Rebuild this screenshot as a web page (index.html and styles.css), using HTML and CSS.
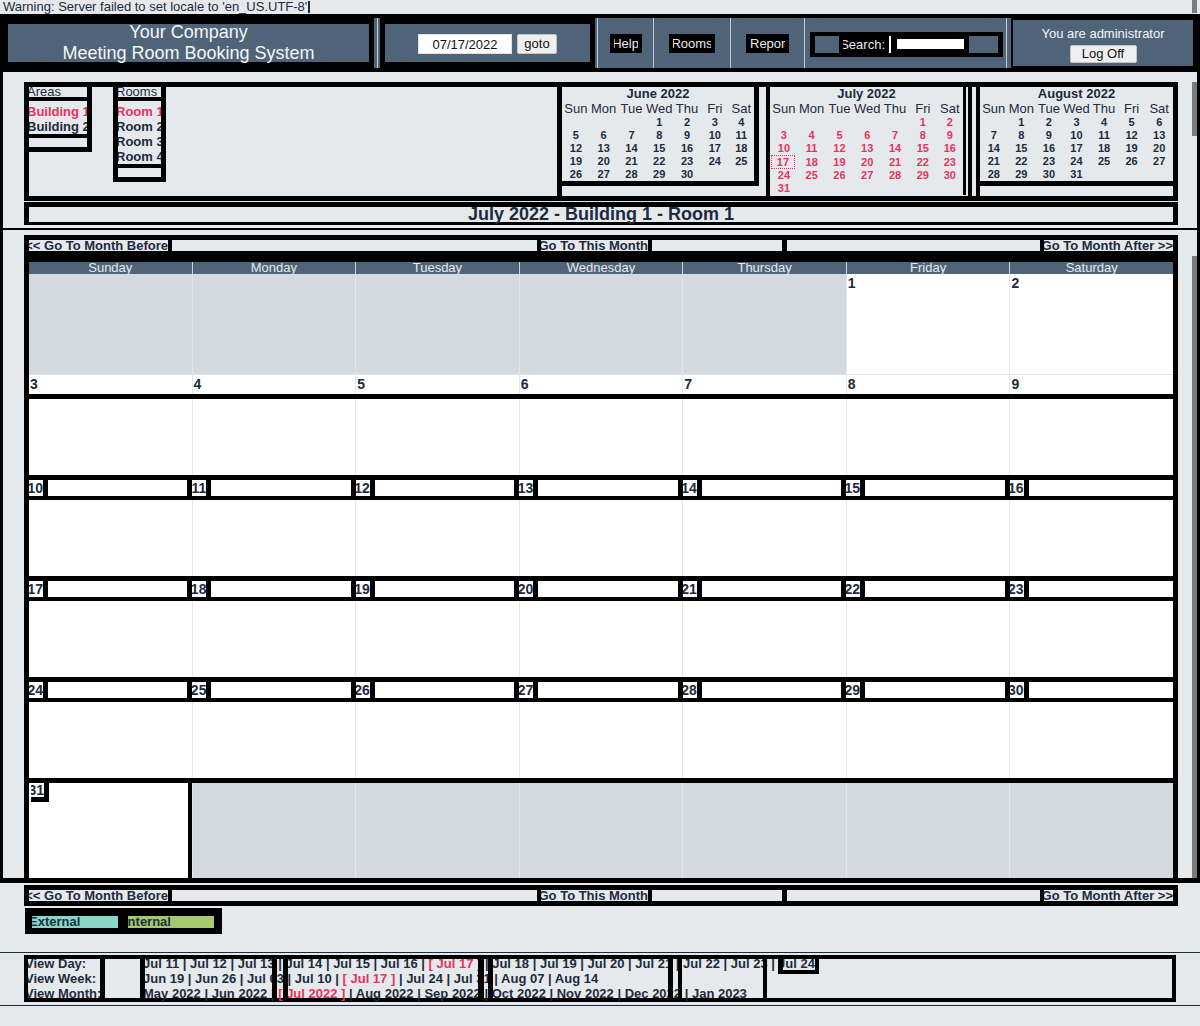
FILE: index.html
```html
<!DOCTYPE html>
<html lang="en">
<head>
<meta charset="utf-8">
<title>Meeting Room Booking System</title>
<link rel="stylesheet" href="styles.css">
</head>
<body>
<div class="warning">Warning: Server failed to set locale to 'en_US.UTF-8'<span class="caret"></span><span class="sb-thumb"></span></div>

<header class="banner">
  <div class="hcell company"><div class="company-box">Your Company<br>Meeting Room Booking System</div></div>
  <div class="hcell datecell"><div class="date-box"><span class="date-input">07/17/2022</span><span class="btn goto">goto</span></div></div>
  <div class="hcell linkcell help"><span class="blk">Help</span></div>
  <div class="hcell linkcell rooms"><span class="blk">Rooms</span></div>
  <div class="hcell linkcell report"><span class="blk">Report</span></div>
  <div class="hcell searchcell"><div class="search-box"><span class="sq"></span><span class="search-label"><span>Search:</span></span><span class="sbar"></span><span class="search-input"></span><span class="sq sq2"></span></div></div>
  <div class="hcell logon"><div class="logon-box"><div class="who">You are administrator</div><span class="btn logoff">Log Off</span></div></div>
</header>

<section class="panel top-panel">
  <div class="dwm">
    <div class="sel areas">
      <div class="sel-head">Areas</div>
      <ul class="sel-list">
        <li class="cur">Building 1</li>
        <li>Building 2</li>
      </ul>
      <div class="sel-foot"></div>
    </div>
    <div class="sel rooms">
      <div class="sel-head">Rooms</div>
      <ul class="sel-list">
        <li class="cur">Room 1</li>
        <li>Room 2</li>
        <li>Room 3</li>
        <li>Room 4</li>
      </ul>
      <div class="sel-foot"></div>
    </div>
    <div class="minicals">
      <div class="mc-cell june">
        <table class="mc">
          <tr><th colspan="7" class="mc-title">June 2022</th></tr>
          <tr class="mc-days"><th>Sun</th><th>Mon</th><th>Tue</th><th>Wed</th><th>Thu</th><th>Fri</th><th>Sat</th></tr>
          <tr><td></td><td></td><td></td><td>1</td><td>2</td><td>3</td><td>4</td></tr>
          <tr><td>5</td><td>6</td><td>7</td><td>8</td><td>9</td><td>10</td><td>11</td></tr>
          <tr><td>12</td><td>13</td><td>14</td><td>15</td><td>16</td><td>17</td><td>18</td></tr>
          <tr><td>19</td><td>20</td><td>21</td><td>22</td><td>23</td><td>24</td><td>25</td></tr>
          <tr><td>26</td><td>27</td><td>28</td><td>29</td><td>30</td><td></td><td></td></tr>
        </table>
      </div>
      <div class="mc-cell july">
        <table class="mc cur-month">
          <tr><th colspan="7" class="mc-title">July 2022</th></tr>
          <tr class="mc-days"><th>Sun</th><th>Mon</th><th>Tue</th><th>Wed</th><th>Thu</th><th>Fri</th><th>Sat</th></tr>
          <tr><td></td><td></td><td></td><td></td><td></td><td>1</td><td>2</td></tr>
          <tr><td>3</td><td>4</td><td>5</td><td>6</td><td>7</td><td>8</td><td>9</td></tr>
          <tr><td>10</td><td>11</td><td>12</td><td>13</td><td>14</td><td>15</td><td>16</td></tr>
          <tr><td><span class="today">17</span></td><td>18</td><td>19</td><td>20</td><td>21</td><td>22</td><td>23</td></tr>
          <tr><td>24</td><td>25</td><td>26</td><td>27</td><td>28</td><td>29</td><td>30</td></tr>
          <tr><td>31</td><td></td><td></td><td></td><td></td><td></td><td></td></tr>
        </table>
      </div>
      <div class="mc-cell august">
        <table class="mc">
          <tr><th colspan="7" class="mc-title">August 2022</th></tr>
          <tr class="mc-days"><th>Sun</th><th>Mon</th><th>Tue</th><th>Wed</th><th>Thu</th><th>Fri</th><th>Sat</th></tr>
          <tr><td></td><td>1</td><td>2</td><td>3</td><td>4</td><td>5</td><td>6</td></tr>
          <tr><td>7</td><td>8</td><td>9</td><td>10</td><td>11</td><td>12</td><td>13</td></tr>
          <tr><td>14</td><td>15</td><td>16</td><td>17</td><td>18</td><td>19</td><td>20</td></tr>
          <tr><td>21</td><td>22</td><td>23</td><td>24</td><td>25</td><td>26</td><td>27</td></tr>
          <tr><td>28</td><td>29</td><td>30</td><td>31</td><td></td><td></td><td></td></tr>
        </table>
      </div>
    </div>
  </div>
  <div class="title-box"><h2>July 2022 - Building 1 - Room 1</h2></div>
  <span class="sb-thumb"></span>
</section>

<section class="panel cal-panel">
  <nav class="monthnav">
    <div class="mn-seg mn-left"><a class="mn-link"><span>&lt;&lt; Go To Month Before</span></a></div>
    <div class="mn-seg mn-mid"><a class="mn-link"><span>Go To This Month</span></a></div>
    <div class="mn-seg mn-right"><a class="mn-link"><span>Go To Month After &gt;&gt;</span></a></div>
  </nav>
  <div class="cal">
    <div class="cal-head">
      <div>Sunday</div><div>Monday</div><div>Tuesday</div><div>Wednesday</div><div>Thursday</div><div>Friday</div><div>Saturday</div>
    </div>
    <div class="wk wk1">
      <div class="d out"></div><div class="d out"></div><div class="d out"></div><div class="d out"></div><div class="d out"></div>
      <div class="d"><span class="dn">1</span></div><div class="d"><span class="dn">2</span></div>
    </div>
    <div class="wk wk-nums">
      <div class="d"><span class="dn">3</span></div><div class="d"><span class="dn">4</span></div><div class="d"><span class="dn">5</span></div><div class="d"><span class="dn">6</span></div><div class="d"><span class="dn">7</span></div><div class="d"><span class="dn">8</span></div><div class="d"><span class="dn">9</span></div>
    </div>
    <div class="band"></div>
    <div class="wk wk-body"><div class="d"></div><div class="d"></div><div class="d"></div><div class="d"></div><div class="d"></div><div class="d"></div><div class="d"></div></div>

    <div class="band"></div>
    <div class="numstrip">
      <div class="ns"><span class="nb">10</span><span class="nw"></span></div><div class="ns"><span class="nb">11</span><span class="nw"></span></div><div class="ns"><span class="nb">12</span><span class="nw"></span></div><div class="ns"><span class="nb">13</span><span class="nw"></span></div><div class="ns"><span class="nb">14</span><span class="nw"></span></div><div class="ns"><span class="nb">15</span><span class="nw"></span></div><div class="ns"><span class="nb">16</span><span class="nw"></span></div>
    </div>
    <div class="band thin"></div>
    <div class="wk wk-body"><div class="d"></div><div class="d"></div><div class="d"></div><div class="d"></div><div class="d"></div><div class="d"></div><div class="d"></div></div>

    <div class="band"></div>
    <div class="numstrip">
      <div class="ns"><span class="nb">17</span><span class="nw"></span></div><div class="ns"><span class="nb">18</span><span class="nw"></span></div><div class="ns"><span class="nb">19</span><span class="nw"></span></div><div class="ns"><span class="nb">20</span><span class="nw"></span></div><div class="ns"><span class="nb">21</span><span class="nw"></span></div><div class="ns"><span class="nb">22</span><span class="nw"></span></div><div class="ns"><span class="nb">23</span><span class="nw"></span></div>
    </div>
    <div class="band thin"></div>
    <div class="wk wk-body"><div class="d"></div><div class="d"></div><div class="d"></div><div class="d"></div><div class="d"></div><div class="d"></div><div class="d"></div></div>

    <div class="band"></div>
    <div class="numstrip">
      <div class="ns"><span class="nb">24</span><span class="nw"></span></div><div class="ns"><span class="nb">25</span><span class="nw"></span></div><div class="ns"><span class="nb">26</span><span class="nw"></span></div><div class="ns"><span class="nb">27</span><span class="nw"></span></div><div class="ns"><span class="nb">28</span><span class="nw"></span></div><div class="ns"><span class="nb">29</span><span class="nw"></span></div><div class="ns"><span class="nb">30</span><span class="nw"></span></div>
    </div>
    <div class="band thin"></div>
    <div class="wk wk-body"><div class="d"></div><div class="d"></div><div class="d"></div><div class="d"></div><div class="d"></div><div class="d"></div><div class="d"></div></div>

    <div class="band"></div>
    <div class="wk wk6">
      <div class="d sun"><span class="nb boxed">31</span></div>
      <div class="d out"></div><div class="d out"></div><div class="d out"></div><div class="d out"></div><div class="d out"></div><div class="d out"></div>
    </div>
  </div>
  <span class="sb-thumb"></span>
</section>

<nav class="monthnav bottom">
  <div class="mn-seg mn-left"><a class="mn-link"><span>&lt;&lt; Go To Month Before</span></a></div>
  <div class="mn-seg mn-mid"><a class="mn-link"><span>Go To This Month</span></a></div>
  <div class="mn-seg mn-right"><a class="mn-link"><span>Go To Month After &gt;&gt;</span></a></div>
</nav>

<div class="legend"><span class="lg ext">External</span><span class="lg int">Internal</span></div>

<section class="views">
  <div class="viewbox">
    <div class="vrow"><span class="vlabel">View Day:</span><span class="vlinks">Jul 11 | Jul 12 | Jul 13 | Jul 14 | Jul 15 | Jul 16 | <b class="now">[ Jul 17 ]</b> | Jul 18 | Jul 19 | Jul 20 | Jul 21 | Jul 22 | Jul 23 |<span class="lastbox"><span>Jul 24</span></span></span></div>
    <div class="vrow"><span class="vlabel">View Week:</span><span class="vlinks">Jun 19 | Jun 26 | Jul 03 | Jul 10 | <b class="now">[ Jul 17 ]</b> | Jul 24 | Jul 31 | Aug 07 | Aug 14</span></div>
    <div class="vrow"><span class="vlabel">View Month:</span><span class="vlinks">May 2022 | Jun 2022 | <b class="now">[ Jul 2022 ]</b> | Aug 2022 | Sep 2022 | Oct 2022 | Nov 2022 | Dec 2022 | Jan 2023</span></div>
    <i class="vbar b1"></i><i class="vbar b2"></i><i class="vbar b3"></i><i class="vbar b4"></i><i class="vbar b5"></i><i class="vbar b6"></i><i class="vbar b7"></i><i class="vbar b8"></i><i class="vbar b9"></i>
  </div>
</section>
</body>
</html>
```

FILE: styles.css
```css
* { box-sizing: border-box; }
html, body { margin: 0; padding: 0; }
body {
  width: 1200px;
  height: 1026px;
  overflow: hidden;
  background: #e6e9ec;
  color: #1d2b3d;
  font-family: "Liberation Sans", Arial, sans-serif;
  font-size: 13px;
}

/* overlay scrollbar thumbs */
.sb-thumb { position: absolute; right: 0; width: 5px; background: #7b7b7b; }

/* warning */
.warning { position: relative; height: 14px; line-height: 14px; font-size: 13px; padding-left: 3px; white-space: nowrap; }
.warning .caret { display: inline-block; width: 2px; height: 12px; background: #1d2b3d; vertical-align: -2px; margin-left: 1px; }
.warning .sb-thumb { top: 0; height: 13px; right: 3px; }

/* banner */
.banner {
  display: flex;
  height: 58px;
  border-style: solid;
  border-color: #000;
  border-width: 4px 5px 4px 3px;
  background: #4f6479;
  color: #fff;
}
.hcell { height: 50px; display: flex; align-items: center; justify-content: center; border-left: 1px solid #c3ccd5; flex: none; }
.company { width: 374px; border-left: 0; justify-content: flex-start; }
.company-box {
  width: 371px; height: 50px;
  border: solid #000; border-width: 6px 5px;
  display: flex; align-items: center; justify-content: center;
  text-align: center; font-size: 18px; line-height: 21px; color: #f4f6f8;
}
.datecell { width: 220px; justify-content: flex-start; padding-left: 2px; }
.date-box {
  width: 215px; height: 50px;
  border: solid #000; border-width: 6px 5px;
  display: flex; align-items: center; justify-content: center; gap: 5px;
  padding-top: 1px;
}
.date-input { width: 94px; height: 20px; background: #fff; color: #111; text-align: center; line-height: 20px; font-size: 13px; border: 1px solid #dfe3e7; }
.btn { display: inline-block; background: #efefef; color: #111; border: 1px solid #c4c4c4; border-radius: 2px; text-align: center; font-size: 13px; }
.goto { width: 40px; height: 20px; line-height: 18px; }
.help { width: 56px; }
.rooms { width: 77px; }
.report { width: 74px; }
.blk {
  display: flex; justify-content: center; overflow: hidden; white-space: nowrap;
  height: 19px; line-height: 19px;
  background: #000; color: #e6e9ec;
  border-left: 4px solid #000; border-right: 4px solid #000;
  margin-top: 1px;
}
.help .blk { width: 32px; }
.rooms .blk { width: 46px; }
.report .blk { width: 43px; justify-content: flex-start; }
.searchcell { width: 202px; justify-content: flex-start; padding-left: 5px; }
.search-box { width: 193px; height: 25px; background: #000; display: flex; align-items: center; padding: 0 5px; margin-top: 2px; }
.sq { width: 24px; height: 17px; background: #4f6479; flex: none; }
.sq2 { width: 29px; margin-left: 5px; }
.search-label { width: 42px; margin-left: 4px; display: flex; justify-content: flex-end; overflow: hidden; white-space: nowrap; color: #e6e9ec; line-height: 17px; }
.sbar { width: 2px; height: 17px; background: #fff; margin-left: 4px; }
.search-input { width: 67px; height: 10px; background: #fff; margin-left: 6px; }
.logon { width: 189px; justify-content: flex-start; padding-left: 4px; }
.logon-box {
  width: 185px; height: 50px; border: 2px solid #000;
  display: flex; flex-direction: column; align-items: center; justify-content: center; gap: 4px;
  color: #f4f6f8; font-size: 13px; line-height: 15px;
  padding-top: 2px;
}
.logoff { width: 67px; height: 18px; line-height: 16px; }

/* panels */
.panel { position: relative; border-left: 3px solid #000; border-right: 3px solid #000; }
.top-panel { padding-top: 10px; border-bottom: 2px solid #000; padding-bottom: 3px; }
.top-panel > .sb-thumb { top: 10px; height: 54px; }
.dwm {
  width: 1154px; height: 119px; margin-left: 21px;
  border: 5px solid #000;
  display: flex; align-items: flex-start;
}
.sel { border-right: 5px solid #000; border-bottom: 5px solid #000; flex: none; }
.areas { width: 63px; }
.sel.rooms { width: 53px; margin-left: 21px; border-left: 5px solid #000; }
.sel-head { height: 10px; line-height: 10px; font-size: 13px; overflow: hidden; text-indent: -2px; white-space: nowrap; }
.sel-list {
  list-style: none; margin: 0; padding: 3px 0 0;
  border-top: 4px solid #000;
  font-weight: bold; font-size: 13px; line-height: 15px;
  overflow: hidden; white-space: nowrap;
}
.sel-list li { text-indent: -2px; }
.sel-list li.cur { color: #e6335f; }
.sel-foot { height: 13px; border-top: 4px solid #000; }

.minicals { margin-left: auto; width: 616px; height: 109px; display: flex; }
.mc-cell { height: 109px; border-left: 5px solid #000; flex: none; }
.june { width: 209px; padding-right: 7px; }
.july { border-left-width: 4px; border-right: 4px solid #000; padding-right: 2px; margin-right: 4px; width: 206px; }
.august { width: 197px; border-left-width: 4px; }
.mc {
  border-collapse: collapse; border-spacing: 0;
  table-layout: fixed;
  width: 197px;
  border-right: 5px solid #000; border-bottom: 5px solid #000;
  text-align: center;
}
.july .mc { width: 196px; border-right-width: 3px; border-bottom: 0; }
.august .mc { width: 193px; border-right: 0; }
.mc th, .mc td { padding: 0; white-space: nowrap; }
.mc-title { font-size: 13px; font-weight: bold; height: 14px; line-height: 14px; }
.mc-days th { font-weight: normal; font-size: 13px; height: 15px; line-height: 15px; overflow: visible; }
.mc td { font-size: 11px; font-weight: bold; height: 13px; line-height: 13px; }
.cur-month td { color: #e6335f; }
.today { display: inline-block; border: 1px dotted #e6335f; width: 24px; line-height: 12px; margin-left: -2px; }

.title-box {
  width: 1154px; margin: 1px 0 0 21px; height: 23px;
  border: solid #000; border-width: 5px 5px 3px;
  text-align: center;
}
.title-box h2 { margin: 0; font-size: 18px; line-height: 15px; font-weight: bold; }

.cal-panel { padding-top: 5px; border-bottom: 5px solid #000; }
.cal-panel > .sb-thumb { top: 26px; bottom: 0; }

/* month nav */
.monthnav {
  width: 1154px; margin-left: 21px; height: 21px;
  background: #000;
  border: 5px solid #000;
  display: flex;
  font-weight: bold; font-size: 13px; line-height: 11px;
}
.mn-seg { height: 11px; background: #e6e9ec; display: flex; overflow: hidden; flex: none; }
.mn-left { width: 508px; }
.mn-mid { width: 241px; margin-left: 4px; }
.mn-right { width: 386px; margin-left: 5px; justify-content: flex-end; }
.mn-link { display: flex; justify-content: flex-end; overflow: hidden; white-space: nowrap; border-right: 4px solid #000; height: 11px; color: #1d2b3d; }
.mn-right .mn-link { border-right: 0; border-left: 4px solid #000; }
.mn-left .mn-link { width: 143px; }
.mn-mid .mn-link { width: 111px; }
.mn-right .mn-link { width: 133px; }
.monthnav.bottom { margin: 2px 0 0 24px; }

/* calendar */
.cal {
  width: 1154px; margin-left: 21px;
  border: solid #000; border-width: 6px 5px 0;
}
.cal-head, .wk, .numstrip { display: grid; grid-template-columns: repeat(7, 1fr); }
.cal-head { height: 12px; column-gap: 1px; background: #c9d1d9; }
.cal-head div { background: #4f6479; color: #e6e9ec; text-align: center; font-size: 13px; line-height: 12px; overflow: hidden; }
.wk { column-gap: 1px; background: #e3e6ea; }
.d { background: #fff; }
.d.out { background: #d4d9e0; }
.wk1 { height: 101px; padding-bottom: 1px; }
.wk-nums { height: 19px; }
.wk-body { height: 76px; }
.dn { display: block; font-weight: bold; font-size: 14px; line-height: 19px; padding-left: 1px; }
.band { height: 5px; background: #000; }
.band.thin { height: 4px; }
.numstrip { height: 16px; background: #000; }
.ns { display: flex; border-right: 5px solid #000; }
.ns:last-child { border-right: 0; }
.nb {
  width: 14px; flex: none; background: #fff;
  font-weight: bold; font-size: 14px; line-height: 16px;
  overflow: hidden; white-space: nowrap; display: flex; justify-content: flex-end;
}
.nw { flex: 1; background: #fff; margin-left: 5px; }
.wk6 { height: 95px; }
.wk6 .sun { border-right: 4px solid #000; }
.nb.boxed { width: 18px; height: 19px; line-height: 14px; border-right: 5px solid #000; border-bottom: 5px solid #000; margin-left: 2px; }

/* legend */
.legend {
  width: 197px; height: 26px; margin: 2px 0 0 25px;
  background: #000; padding: 8px 8px 6px 7px;
  display: flex; gap: 10px;
}
.lg { width: 86px; height: 12px; line-height: 12px; font-weight: bold; font-size: 13px; overflow: hidden; white-space: nowrap; color: #1d3142; }
.lg.ext { background: #89d7c6; text-indent: -3px; }
.lg.int { background: #a6c86f; text-indent: -4px; }

/* views */
.views {
  margin-top: 18px;
  border-top: 1px solid #1d2b3d; border-bottom: 1px solid #1d2b3d;
  padding: 2px 0 3px;
}
.viewbox {
  position: relative;
  width: 1152px; height: 47px; margin-left: 24px;
  border: 4px solid #000;
  font-weight: bold; font-size: 13px; line-height: 15px;
}
.vrow { display: flex; white-space: nowrap; height: 15px; }
.vrow:first-child { margin-top: -3px; }
.vlabel { width: 115px; flex: none; text-indent: -3px; overflow: hidden; }
.now { color: #e6335f; }
.lastbox {
  display: inline-flex; justify-content: flex-end; height: 18px; width: 41px; vertical-align: top;
  border: solid #000; border-width: 0 4px 4px 5px; overflow: hidden; line-height: 15px; margin-left: 3px;
}
.vbar { position: absolute; top: 0; bottom: 0; width: 5px; background: #000; }
.b1 { left: 72px; }
.b2 { left: 112px; }
.b3 { left: 244px; }
.b4 { left: 255px; }
.b5 { left: 450px; width: 6px; }
.b6 { left: 460px; }
.b7 { left: 640px; }
.b8 { left: 650px; width: 4px; }
.b9 { left: 735px; width: 4px; }
```
